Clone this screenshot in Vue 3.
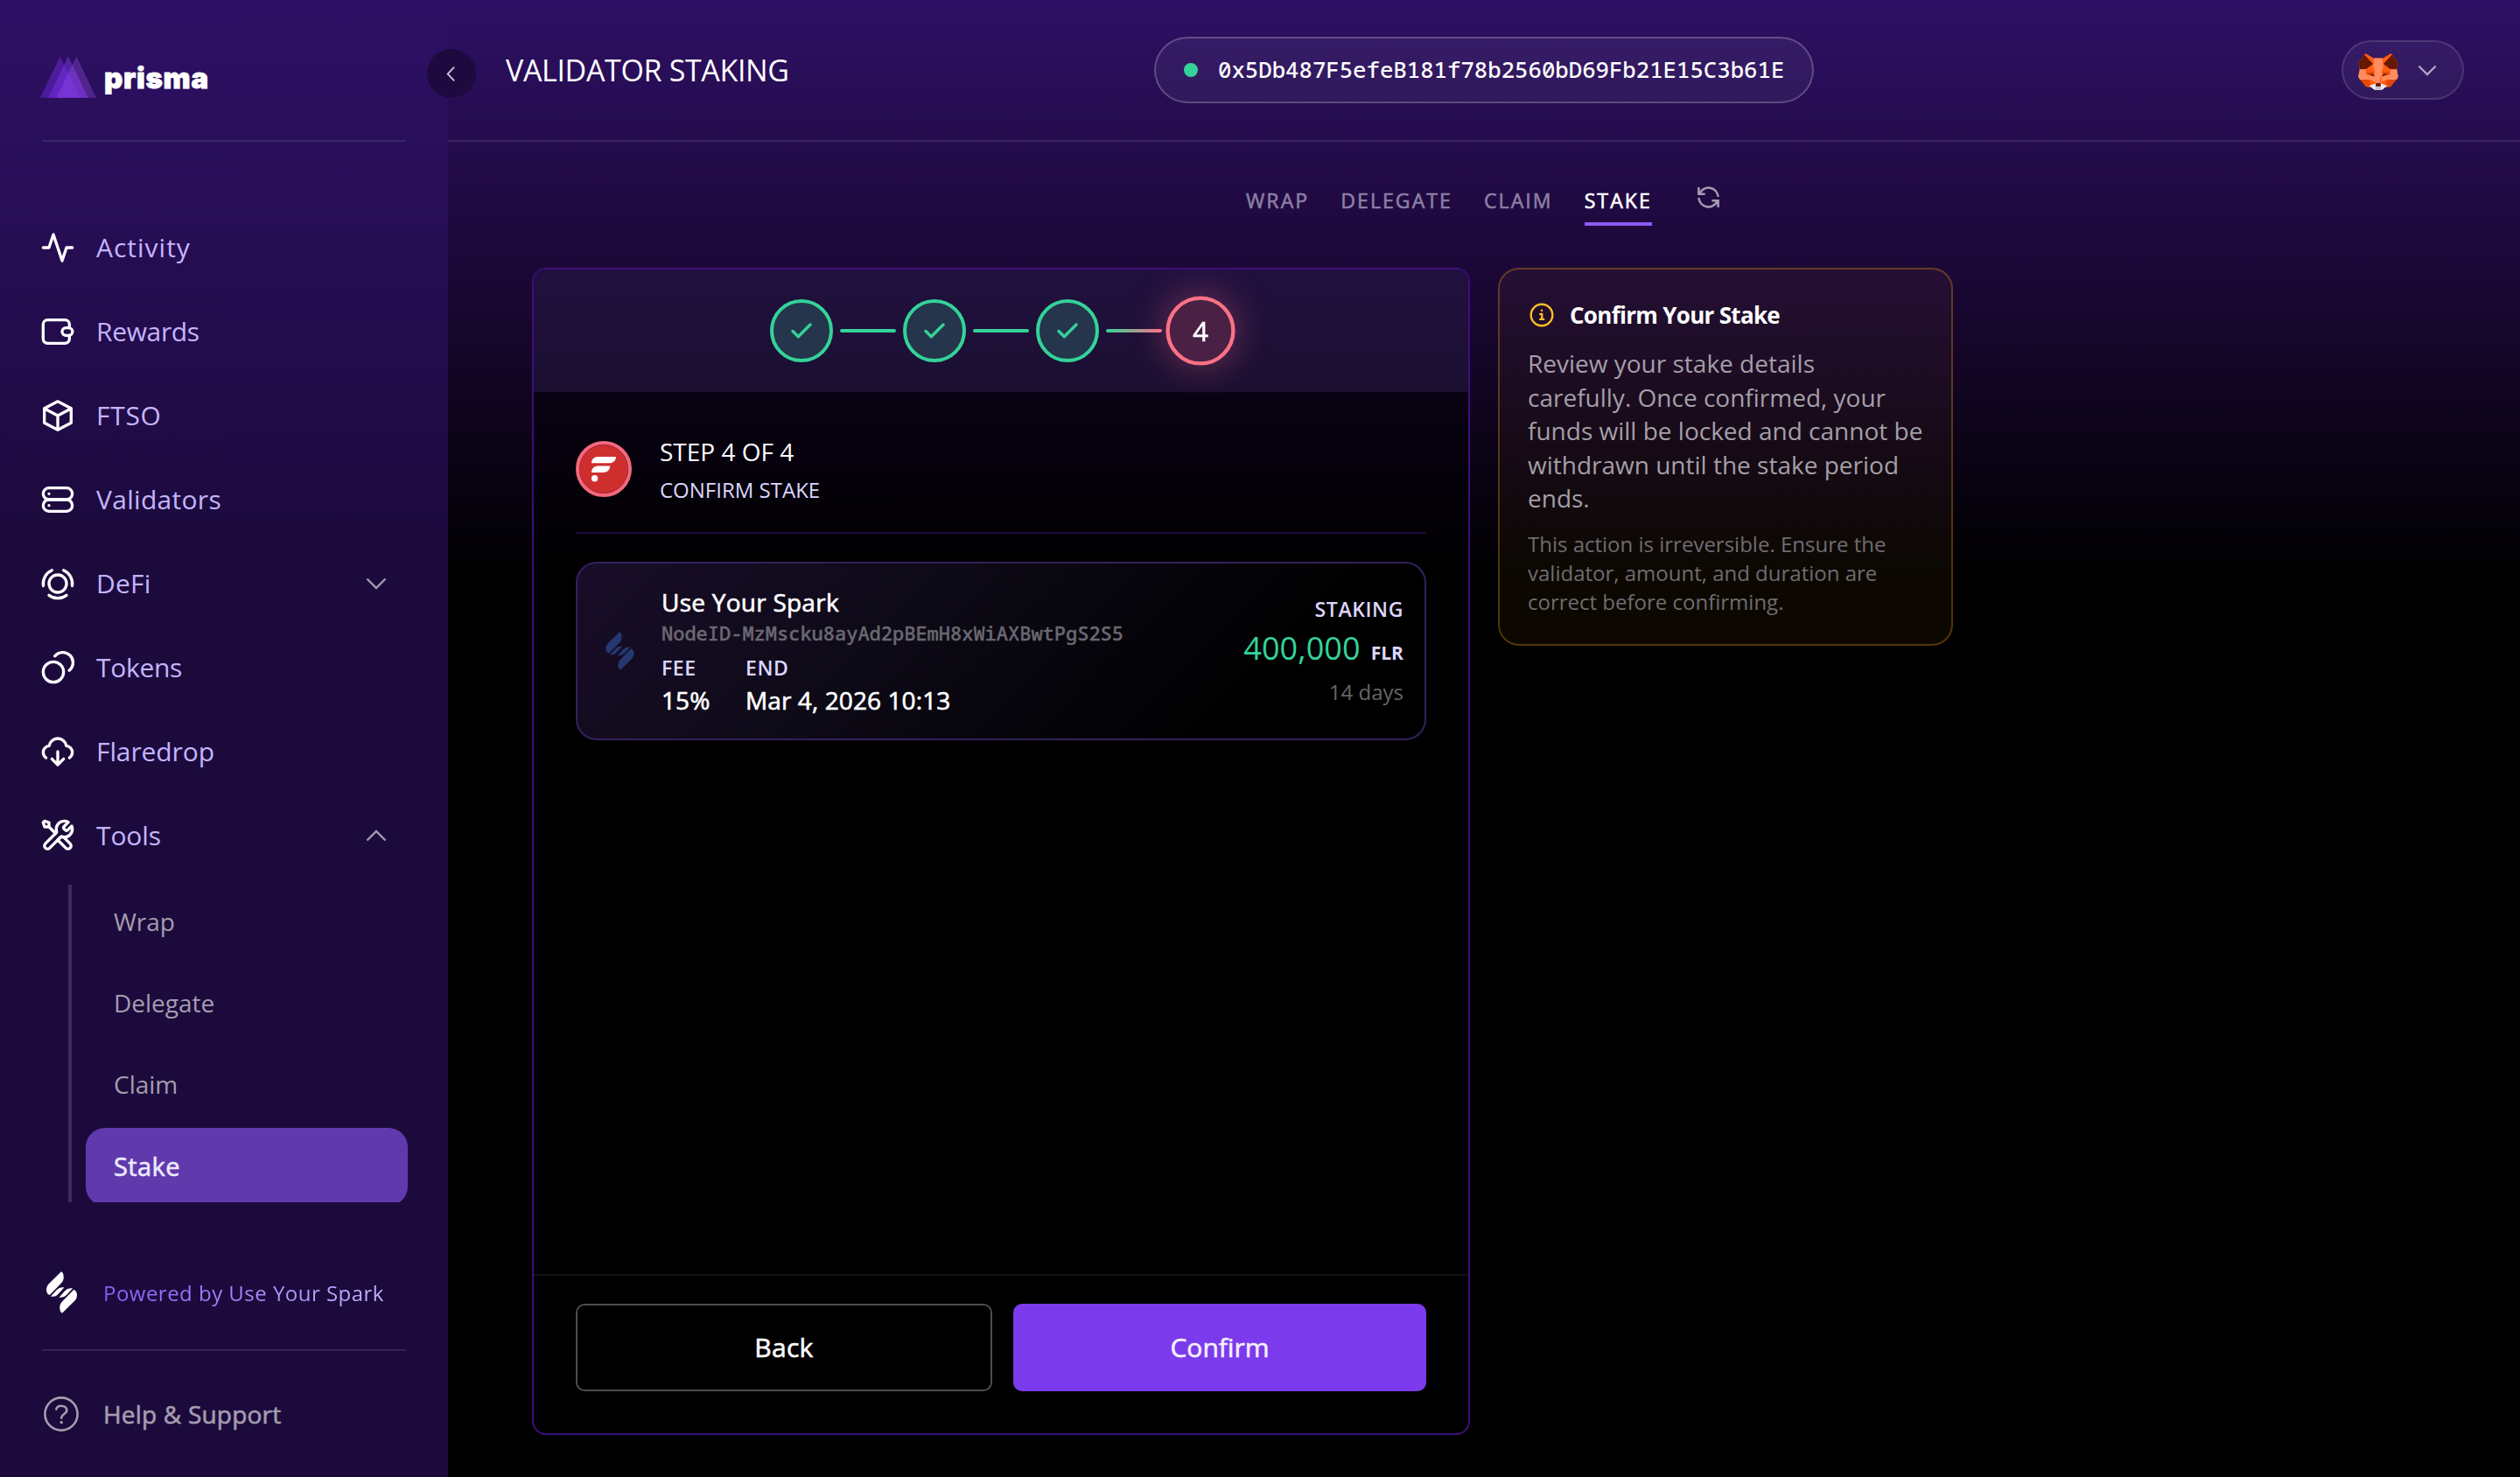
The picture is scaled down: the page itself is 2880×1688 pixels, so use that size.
<template>
  <div class="app">
    <aside class="sidebar">
      <div class="sidebar__brand">
        <svg class="brand-mark" viewBox="48 73 192 143">
          <defs>
            <linearGradient id="prism" x1="0" y1="0" x2="0" y2="1">
              <stop offset="0" stop-color="#7c3aed" stop-opacity="0.45" />
              <stop offset="1" stop-color="#6d28d9" stop-opacity="0.65" />
            </linearGradient>
          </defs>
          <path d="M116 73L184 216H48Z" fill="#5b21b6" fill-opacity="0.7" />
          <path d="M144 73L212 216H76Z" fill="url(#prism)" />
          <path d="M172 73L240 216H104Z" fill="#a855f7" fill-opacity="0.3" />
        </svg>
        <span class="brand-name">prisma</span>
      </div>

      <nav class="nav">
        <a class="nav__item" v-for="item in menu" :key="item.label">
          <svg class="nav__icon" viewBox="0 0 24 24">
            <path v-for="(d, i) in item.paths" :key="i" :d="d" />
          </svg>
          <span class="nav__label" :style="{ letterSpacing: item.tracking + 'px' }">{{ item.label }}</span>
          <svg v-if="item.chevron" class="nav__chevron" :class="'-' + item.chevron" viewBox="0 0 24 14">
            <path d="M1.5 1.5L12 12L22.5 1.5" />
          </svg>
        </a>
      </nav>

      <div class="subnav">
        <a
          class="subnav__item"
          v-for="sub in tools"
          :key="sub"
          :class="{ '-active': sub === 'Stake' }"
        >{{ sub }}</a>
      </div>

      <div class="powered">
        <svg class="powered__logo" viewBox="0 0 35 48">
          <path v-for="(d, i) in spark" :key="i" :d="d" />
        </svg>
        <span class="powered__text">Powered by Use Your Spark</span>
      </div>

      <div class="help">
        <svg class="help__icon" viewBox="0 0 40 40">
          <circle cx="20" cy="20" r="18.6" />
          <path d="M14.3 14.6C14.8 12.2 17 10.7 20 10.7c3.600 0 6.300 2 6.300 5.100C26.300 20.300 20.200 19.700 20.200 24.600" />
          <path d="M20.200 29.300v.4" class="help__dot" />
        </svg>
        <span class="help__text">Help &amp; Support</span>
      </div>
    </aside>

    <button class="collapse">
      <svg viewBox="0 0 12 20"><path d="M10 1.500L1.800 10L10 18.500" /></svg>
    </button>

    <div class="page">
      <header class="header">
        <h1 class="header__title">VALIDATOR STAKING</h1>
        <div class="address">
          <span class="address__dot"></span>
          <span class="address__text">0x5Db487F5efeB181f78b2560bD69Fb21E15C3b61E</span>
        </div>
        <div class="wallet">
          <svg class="wallet__fox" viewBox="285 182 138 127">
            <path fill="#ff5c16" d="M310 182L338 199H370L398 182L422 214L418 240L423 262L415 273L396 298L370 300L354 309L338 300L312 298L293 273L285 262L290 240L286 214Z" />
            <path fill="#661800" d="M307 187L286 213L290 237H311L336 218ZM401 187L422 213L418 237H397L372 218Z" />
            <path fill="#ff8d5d" d="M340 199H368L372 232L363 284H345L336 232ZM290 237H312V255L346 263L350 283L325 273H290L285 262ZM418 237H396V255L362 263L358 283L383 273H418L423 262Z" />
            <path fill="#ff5c16" d="M316 234L337 229L343 250L322 246ZM392 234L371 229L365 250L386 246Z" />
            <path fill="#e34807" d="M291 273H323L327 291L312 298ZM417 273H385L381 291L396 298ZM312 248L336 246L343 262L320 256ZM396 248L372 246L365 262L388 256Z" />
            <path fill="#661800" d="M322 253L336 253L340 262ZM386 253L372 253L368 262Z" />
            <path fill="#e7ebf6" d="M323 294L345 286H363L385 294L367 308H341Z" />
            <path fill="#c0c4cd" d="M345 295H363V309H345Z" />
            <path fill="#661800" d="M347 285H361L363 290V296H345V290Z" />
          </svg>
          <svg class="wallet__chevron" viewBox="0 0 24 14"><path d="M1.500 1.500L12 12L22.500 1.500" /></svg>
        </div>
      </header>

      <div class="tabs">
        <a class="tabs__item" v-for="tab in tabs" :key="tab" :class="{ '-active': tab === 'STAKE' }">{{ tab }}</a>
        <svg class="tabs__refresh" viewBox="0 0 24 24">
          <path d="M1.300 1V8.300H8.300M22.700 23V15.700H15.700M2.400 8A10.500 10.500 0 0 1 22.600 11.500M21.600 16A10.500 10.500 0 0 1 1.400 12.500" />
        </svg>
      </div>

      <main class="content">
        <section class="stake-card">
          <div class="steps">
            <template v-for="n in 4" :key="n">
              <span v-if="n > 1" class="steps__line" :class="{ '-last': n === 4 }"></span>
              <div class="steps__circle" :class="n === 4 ? '-current' : '-done'">
                <svg v-if="n < 4" viewBox="0 0 24 18"><path d="M2 9.500L8.300 15.800L22 2" /></svg>
                <span v-else>{{ n }}</span>
              </div>
            </template>
          </div>

          <div class="stake-card__body">
            <div class="step-head">
              <svg class="step-head__logo" viewBox="0 0 64 64">
                <circle cx="32" cy="32" r="30" fill="#cf2e2e" stroke="#f4687c" stroke-width="4" />
                <circle cx="32" cy="32" r="27.600" fill="none" stroke="#8f2a3a" stroke-width="0.800" />
                <path fill="#fff" d="M18 25.300C18 21 21 18 25.500 18H46C46 22.300 43 25.300 38.500 25.300ZM18 36C18 31.600 21 28.600 25.500 28.600H39.200C39.200 33 36.200 36 31.700 36Z" />
                <circle cx="21.600" cy="42.700" r="3.700" fill="#fff" />
              </svg>
              <div class="step-head__text">
                <div class="step-head__title">STEP 4 OF 4</div>
                <div class="step-head__sub">CONFIRM STAKE</div>
              </div>
            </div>

            <div class="validator">
              <svg class="validator__logo" viewBox="0 0 35 48">
                <path v-for="(d, i) in spark" :key="i" :d="d" />
              </svg>
              <div class="validator__info">
                <div class="validator__name">Use Your Spark</div>
                <div class="validator__node">NodeID-MzMscku8ayAd2pBEmH8xWiAXBwtPgS2S5</div>
                <div class="validator__meta">
                  <div class="meta -fee">
                    <span class="meta__label">FEE</span>
                    <span class="meta__value">15%</span>
                  </div>
                  <div class="meta">
                    <span class="meta__label">END</span>
                    <span class="meta__value">Mar 4, 2026 10:13</span>
                  </div>
                </div>
              </div>
              <div class="validator__stake">
                <div class="meta__label">STAKING</div>
                <div class="amount">400,000<span class="amount__unit">FLR</span></div>
                <div class="duration">14 days</div>
              </div>
            </div>
          </div>

          <div class="actions">
            <button class="btn -back">Back</button>
            <button class="btn -confirm">Confirm</button>
          </div>
        </section>

        <section class="notice">
          <div class="notice__head">
            <svg class="notice__icon" viewBox="0 0 28 28">
              <circle cx="14" cy="14" r="12.300" />
              <path d="M12.300 13H14.200V18.800M12.200 18.900H16.200" />
              <path d="M14 8.600v.3" />
            </svg>
            <span>Confirm Your Stake</span>
          </div>
          <p class="notice__text">Review your stake details carefully. Once confirmed, your funds will be locked and cannot be withdrawn until the stake period ends.</p>
          <p class="notice__hint">This action is irreversible. Ensure the validator, amount, and duration are correct before confirming.</p>
        </section>
      </main>
    </div>
  </div>
</template>

<script setup>
const tabs = ['WRAP', 'DELEGATE', 'CLAIM', 'STAKE']
const tools = ['Wrap', 'Delegate', 'Claim', 'Stake']

const menu = [
  { label: 'Activity', tracking: 1, paths: ['M22 12H18L15 21L9 3L6 12H2'] },
  {
    label: 'Rewards',
    tracking: -0.35,
    paths: [
      'M20 9.400V7a3 3 0 0 0-3-3H5a3 3 0 0 0-3 3v10a3 3 0 0 0 3 3h12a3 3 0 0 0 3-3v-2.400',
      'M17.600 9.400h1.900a2.600 2.600 0 0 1 0 5.200h-1.900a2.600 2.600 0 0 1 0-5.200Z'
    ]
  },
  {
    label: 'FTSO',
    tracking: 0.7,
    paths: ['M12 2.300L21.200 7V17L12 21.700L2.800 17V7Z', 'M3.200 7.300L12 12L20.800 7.300M12 12V21.500']
  },
  {
    label: 'Validators',
    tracking: 0.3,
    paths: [
      'M6 4H18a4 4 0 0 1 0 8H6a4 4 0 0 1 0-8Z',
      'M6 12H18a4 4 0 0 1 0 8H6a4 4 0 0 1 0-8Z',
      'M6 8h.01M6 16h.01'
    ]
  },
  {
    label: 'DeFi',
    tracking: 0.2,
    chevron: 'down',
    paths: [
      'M12 6a6 6 0 1 1 0 12a6 6 0 1 1 0-12Z',
      'M2.100 13.500A10 10 0 0 1 8 2.900M16 2.900A10 10 0 0 1 21.900 13.500M18 20A10 10 0 0 1 6 20'
    ]
  },
  {
    label: 'Tokens',
    tracking: -0.3,
    paths: ['M9 8a7 7 0 1 1 0 14a7 7 0 1 1 0-14Z', 'M10.050 4.100A7 7 0 1 1 19.900 13.950']
  },
  {
    label: 'Flaredrop',
    tracking: -0.1,
    paths: [
      'M4 16.242C2.794 15.435 2 14.060 2 12.500C2 10.156 3.792 8.231 6.080 8.019C6.548 5.172 9.020 3 12 3C14.980 3 17.452 5.172 17.920 8.019C20.209 8.231 22 10.156 22 12.500C22 14.060 21.206 15.435 20 16.242',
      'M8 17L12 21L16 17M12 21V12'
    ]
  },
  {
    label: 'Tools',
    tracking: -0.1,
    chevron: 'up',
    paths: [
      'M6 6L10.500 10.500M6 6H3L2 3L3 2L6 3V6Z',
      'M19.259 2.741L16.631 5.369C16.235 5.765 16.037 5.963 15.963 6.191C15.898 6.392 15.898 6.608 15.963 6.809C16.037 7.037 16.235 7.235 16.631 7.631L16.869 7.869C17.265 8.265 17.463 8.463 17.691 8.537C17.892 8.602 18.108 8.602 18.309 8.537C18.537 8.463 18.735 8.265 19.131 7.869L21.589 5.411C21.854 6.055 22 6.760 22 7.500C22 10.538 19.538 13 16.500 13C16.134 13 15.776 12.964 15.430 12.896C14.944 12.800 14.700 12.752 14.553 12.767C14.397 12.782 14.319 12.806 14.181 12.880C14.050 12.950 13.919 13.081 13.657 13.343L6.500 20.500C5.672 21.328 4.328 21.328 3.500 20.500C2.672 19.672 2.672 18.328 3.500 17.500L10.657 10.343C10.919 10.081 11.050 9.950 11.120 9.819C11.194 9.681 11.218 9.603 11.233 9.447C11.248 9.299 11.200 9.056 11.104 8.570C11.036 8.224 11 7.866 11 7.500C11 4.462 13.462 2 16.500 2C17.506 2 18.448 2.270 19.259 2.741Z',
      'M12 15L17.500 20.500C18.328 21.328 19.672 21.328 20.500 20.500C21.328 19.672 21.328 18.328 20.500 17.500L15.975 12.975C15.655 12.945 15.343 12.887 15.041 12.804C14.652 12.698 14.225 12.775 13.940 13.060L12 15Z'
    ]
  }
]

const spark = [
  'M17 .3Q20 1.500 19.700 8Q19.500 11 17 13.500L3.800 27Q0 26 0 20.500Q0 17 2.500 14.500Z',
  'M4.800 28.800L12 21Q14.500 18.300 18 18.300H20.500L13.300 26.200Q11 28.800 7.500 28.800Z',
  'M14.500 29.700L21.700 21.800Q24 19.200 27.500 19.200H30.200L23 27Q20.500 29.700 17 29.700Z',
  'M18 47.700Q15 46.500 15.300 40Q15.500 37 18 34.500L31.200 21Q35 22 35 27.500Q35 31 32.500 33.500Z'
]
</script>

<style>
body {
  background: #000;
}
</style>

<style scoped>
.app {
  position: relative;
  display: flex;
  width: 2880px;
  height: 1688px;
  overflow: hidden;
  color: #fff;
  font-family: 'Open Sans', 'Noto Sans', sans-serif;
  background: linear-gradient(180deg, #2e1065 0, #1c0838 300px, #000 660px);
}

.app * {
  box-sizing: border-box;
}

svg {
  display: block;
  flex: none;
}

/* medium weight, between the regular and semibold faces */
.tabs__item,
.help__text,
.subnav__item.-active,
.steps__circle,
.validator__name,
.meta__value,
.btn {
  -webkit-text-stroke: 0.6px currentColor;
}

/* sidebar */
.sidebar {
  display: flex;
  flex-direction: column;
  flex: none;
  width: 512px;
  height: 100%;
  padding: 0 48px;
  background: linear-gradient(180deg, #2e1065 0, #1c0a3d 620px);
}

.sidebar__brand {
  display: flex;
  align-items: flex-start;
  height: 162px;
  padding-top: 64px;
  border-bottom: 2px solid rgba(255, 255, 255, 0.1);
}

.brand-mark {
  width: 64px;
  height: 48px;
  margin-left: -2px;
}

.brand-name {
  margin-left: 9px;
  margin-top: 5px;
  font: 900 33px/40px Inter, sans-serif;
  letter-spacing: 0.7px;
  -webkit-text-stroke: 0.8px #fff;
}

.nav {
  display: flex;
  flex-direction: column;
  margin-top: 73px;
}

.nav__item {
  display: flex;
  align-items: center;
  height: 96px;
}

.nav__icon {
  width: 40px;
  height: 40px;
  margin-left: -2px;
  fill: none;
  stroke: #fff;
  stroke-width: 2;
  stroke-linecap: round;
  stroke-linejoin: round;
}

.nav__label {
  flex: 1;
  margin-left: 24px;
  padding-bottom: 2px;
  color: #c4b5fd;
  font-size: 30px;
}

.nav__chevron {
  width: 24px;
  height: 14px;
  margin-right: 22px;
  fill: none;
  stroke: #a49bb3;
  stroke-width: 2.4;
}

.nav__chevron.-up {
  transform: rotate(180deg);
}

.subnav {
  height: 363px;
  margin: 8px -2px 0 30px;
  padding-left: 16px;
  border-left: 4px solid #3f2b5c;
  overflow: hidden;
}

.subnav__item {
  display: block;
  height: 89px;
  margin-bottom: 4px;
  padding-left: 32px;
  color: #a49dae;
  font-size: 28px;
  line-height: 87px;
}

.subnav__item:first-child {
  margin-top: -1px;
}

.subnav__item.-active {
  color: #ede9fe;
  background: #603aac;
  border-radius: 22px;
  font-size: 29px;
  letter-spacing: 0.4px;
}

.powered {
  display: flex;
  align-items: center;
  height: 170px;
  padding-top: 38px;
  border-bottom: 2px solid #36244f;
}

.powered__logo {
  width: 35px;
  height: 48px;
  margin-left: 5px;
  fill: #fff;
}

.powered__text {
  margin-left: 30px;
  font-size: 24px;
  letter-spacing: 0.48px;
  color: transparent;
  background: linear-gradient(90deg, #8b5cf6, #c4b5fd);
  background-clip: text;
}

.help {
  display: flex;
  align-items: center;
  height: 144px;
  color: #a49dae;
  font-size: 28px;
  letter-spacing: 0.2px;
}

.help__icon {
  width: 40px;
  height: 40px;
  margin: 0 28px 0 2px;
  fill: none;
  stroke: #a49dae;
  stroke-width: 2.6;
  stroke-linecap: round;
}

.help__dot {
  stroke-width: 3.2;
}

/* sits on the seam between the sidebar and the page */
.collapse {
  position: absolute;
  top: 56px;
  left: 488px;
  display: flex;
  align-items: center;
  justify-content: center;
  width: 56px;
  height: 56px;
  padding: 0;
  border: none;
  border-radius: 50%;
  background: #1e0a3f;
}

.collapse svg {
  width: 11px;
  height: 19px;
  margin-right: 2px;
  fill: none;
  stroke: #c9c2d6;
  stroke-width: 2;
}

/* page */
.page {
  display: flex;
  flex-direction: column;
  flex: 1;
}

.header {
  display: flex;
  align-items: center;
  height: 162px;
  padding: 0 64px 0 66px;
  border-bottom: 2px solid rgba(255, 255, 255, 0.1);
}

.header__title {
  width: 741px;
  margin: 0;
  font-size: 34px;
  font-weight: 400;
  letter-spacing: -0.35px;
}

.address {
  display: flex;
  align-items: center;
  width: 754px;
  height: 76px;
  padding-left: 32px;
  border: 2px solid rgba(255, 255, 255, 0.22);
  border-radius: 38px;
  background: rgba(255, 255, 255, 0.05);
}

.address__dot {
  width: 16px;
  height: 16px;
  margin-right: 23px;
  border-radius: 50%;
  background: #34d399;
}

.address__text {
  padding-bottom: 1px;
  font-family: 'Noto Sans Mono', 'DejaVu Sans Mono', monospace;
  font-size: 25.7px;
  font-weight: 500;
}

.wallet {
  display: flex;
  align-items: center;
  width: 140px;
  height: 68px;
  margin-left: auto;
  padding-left: 17px;
  border: 2px solid rgba(255, 255, 255, 0.12);
  border-radius: 34px;
  background: rgba(255, 255, 255, 0.05);
}

.wallet__fox {
  width: 46px;
  height: 42px;
  margin-top: 4px;
}

.wallet__chevron {
  width: 22px;
  height: 13px;
  margin-left: 22px;
  fill: none;
  stroke: #b3a6cb;
  stroke-width: 2.4;
}

.tabs {
  display: flex;
  align-items: flex-start;
  height: 144px;
  padding-top: 34px;
  padding-left: 912px;
}

.tabs__item {
  margin-right: 36px;
  padding: 19px 0 11px;
  border-bottom: 4px solid transparent;
  color: #8b7fa3;
  font-size: 23px;
  line-height: 28px;
  letter-spacing: 2.1px;
}

.tabs__item.-active {
  color: #fff;
  border-bottom-color: #8b5cf6;
}

.tabs__refresh {
  width: 25px;
  height: 25px;
  margin: 17px 0 0 16px;
  fill: none;
  stroke: #a49dae;
  stroke-width: 2.4;
}

.content {
  display: flex;
  align-items: flex-start;
  gap: 32px;
  padding-left: 96px;
}

.stake-card {
  display: flex;
  flex-direction: column;
  width: 1072px;
  height: 1334px;
  border: 2px solid #3b0f7d;
  border-radius: 16px;
  background: rgba(0, 0, 0, 0.4);
  overflow: hidden;
}

.steps {
  display: flex;
  align-items: center;
  justify-content: center;
  gap: 8px;
  height: 140px;
  background: linear-gradient(180deg, #21103f, #1b0f31);
}

.steps__circle {
  display: flex;
  align-items: center;
  justify-content: center;
  width: 72px;
  height: 72px;
  border: 4px solid #34d399;
  border-radius: 50%;
  background: #24354c;
  font-size: 28px;
}

.steps__circle svg {
  width: 24px;
  height: 18px;
  fill: none;
  stroke: #34d399;
  stroke-width: 3.4;
  stroke-linecap: round;
  stroke-linejoin: round;
}

.steps__circle.-current {
  border-color: #fb7185;
  background: #4a2044;
  box-shadow: 0 0 40px rgba(251, 113, 133, 0.4);
  transform: scale(1.1);
}

.steps__line {
  width: 64px;
  height: 4px;
  border-radius: 2px;
  background: #34d399;
}

.steps__line.-last {
  background: linear-gradient(90deg, #34d399, #fb7185);
}

.stake-card__body {
  flex: 1;
  padding: 56px 48px 0;
}

.step-head {
  display: flex;
  height: 106px;
  border-bottom: 2px solid #210a42;
}

.step-head__logo {
  width: 64px;
  height: 64px;
}

.step-head__text {
  margin-left: 32px;
  margin-top: -8px;
}

.step-head__title {
  font-size: 28px;
  line-height: 40px;
}

.step-head__sub {
  margin-top: 7px;
  color: #ddd6fe;
  font-size: 24px;
  line-height: 34px;
}

.validator {
  display: flex;
  height: 204px;
  margin-top: 32px;
  padding: 24px 24px 0 32px;
  border: 2px solid #33215c;
  border-radius: 24px;
  background: linear-gradient(135deg, #190d29 0, #0e0a18 35%, #000 80%);
}

.validator__logo {
  width: 33px;
  height: 44px;
  margin-top: 54px;
  fill: #25386f;
}

.validator__info {
  margin-left: 31px;
}

.validator__name {
  margin-top: 1px;
  font-size: 28px;
  line-height: 38px;
  letter-spacing: 0.25px;
}

.validator__node {
  margin-top: 1px;
  color: #6a6871;
  font-family: 'Noto Sans Mono', 'DejaVu Sans Mono', monospace;
  font-size: 22px;
  font-weight: 500;
  line-height: 30px;
  -webkit-text-stroke: 0.4px currentColor;
}

.validator__meta {
  display: flex;
  margin-top: 9px;
}

.meta {
  display: flex;
  flex-direction: column;
}

.meta.-fee {
  width: 96px;
}

.meta__label {
  color: #ddd6fe;
  font-size: 23px;
  font-weight: 600;
  line-height: 32px;
  letter-spacing: 0.6px;
}

.meta__value {
  margin-top: 2px;
  font-size: 28px;
  line-height: 38px;
  letter-spacing: 0.1px;
}

.validator__stake {
  display: flex;
  flex-direction: column;
  align-items: flex-end;
  flex: 1;
  margin-top: 12px;
}

.amount {
  margin-top: 4px;
  color: #34d399;
  font-size: 36px;
  line-height: 50px;
  letter-spacing: 0.1px;
}

.amount__unit {
  margin-left: 12px;
  color: #ddd6fe;
  font-size: 21px;
  font-weight: 700;
  letter-spacing: 0;
}

.duration {
  margin-top: 3px;
  color: #666;
  font-size: 24px;
  line-height: 34px;
}

.actions {
  display: flex;
  gap: 24px;
  height: 182px;
  padding: 32px 48px 0;
  border-top: 2px solid #121212;
}

.btn {
  height: 100px;
  padding-bottom: 3px;
  border-radius: 10px;
  color: #fff;
  font-family: inherit;
  font-size: 30px;
}

.btn.-back {
  width: 476px;
  border: 2px solid #4d4d4d;
  background: transparent;
  letter-spacing: 0.3px;
}

.btn.-confirm {
  width: 472px;
  border: none;
  color: #f5f0ff;
  background: #7c3aed;
}

.notice {
  width: 520px;
  height: 432px;
  padding: 32px 32px 0;
  border: 2px solid rgba(245, 158, 11, 0.3);
  border-radius: 24px;
  background: rgba(245, 158, 11, 0.05);
}

.notice__head {
  display: flex;
  align-items: center;
  height: 40px;
  font-size: 26px;
  font-weight: 700;
  letter-spacing: -0.7px;
}

.notice__icon {
  width: 28px;
  height: 28px;
  margin: 0 18px 0 2px;
  fill: none;
  stroke: #fbbf24;
  stroke-width: 2.4;
  stroke-linecap: round;
}

.notice__text {
  margin: 16px 0 0;
  color: #a39fa8;
  font-size: 28px;
  line-height: 38.5px;
}

.notice__hint {
  margin: 16px 0 0;
  color: #6f6c70;
  font-size: 24px;
  line-height: 33px;
}
</style>
